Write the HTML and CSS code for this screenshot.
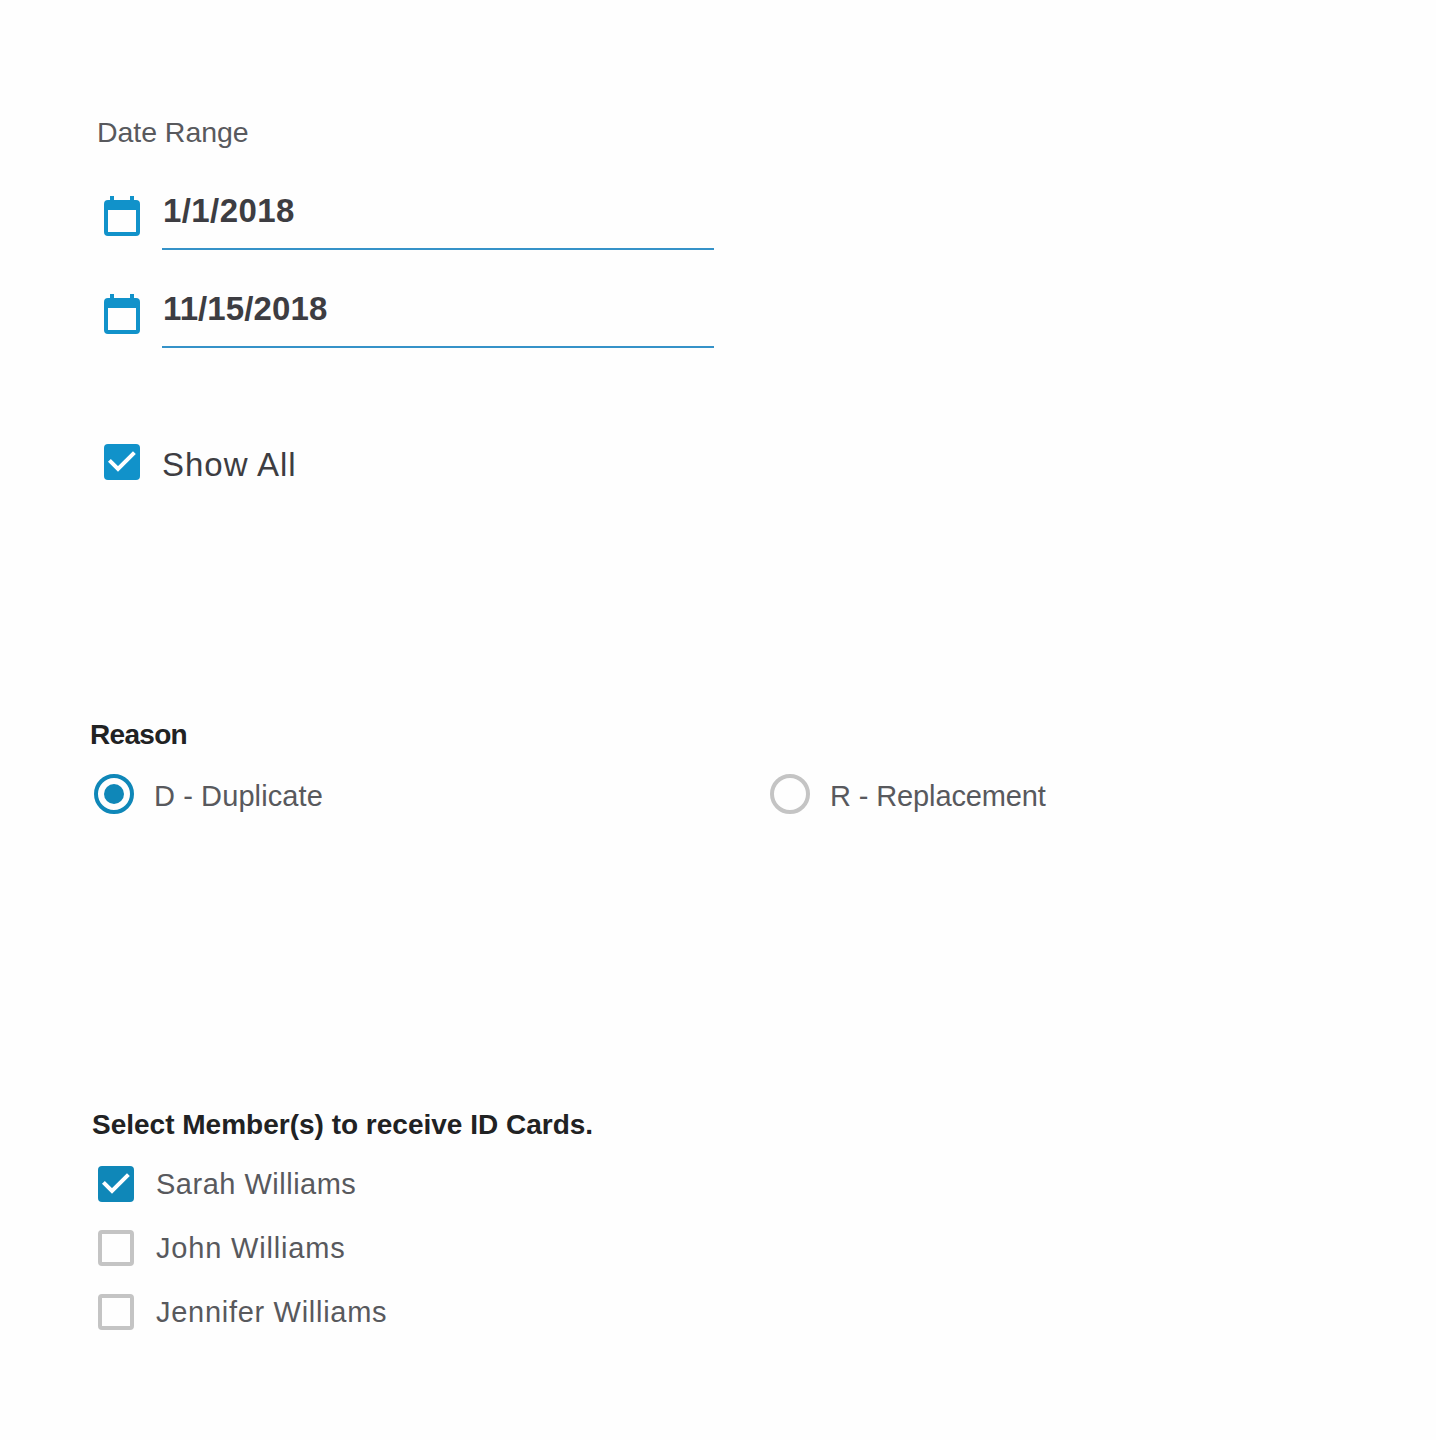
FILE: index.html
```html
<!DOCTYPE html>
<html lang="en">
<head>
<meta charset="utf-8">
<title>ID Card Request</title>
<link rel="stylesheet" href="styles.css">
</head>
<body>
<main class="page">
  <section class="dates">
    <h2 class="dates-title">Date Range</h2>
    <div class="date-row">
      <svg class="calendar" viewBox="0 0 36 40"><path fill-rule="evenodd" d="M6 0h4v4h16V0h4v4h2a4 4 0 0 1 4 4v28a4 4 0 0 1-4 4H4a4 4 0 0 1-4-4V8a4 4 0 0 1 4-4h2zM4 14v22h28V14z"/></svg>
      <div class="date-field date-start">1/1/2018</div>
    </div>
    <div class="date-row">
      <svg class="calendar" viewBox="0 0 36 40"><path fill-rule="evenodd" d="M6 0h4v4h16V0h4v4h2a4 4 0 0 1 4 4v28a4 4 0 0 1-4 4H4a4 4 0 0 1-4-4V8a4 4 0 0 1 4-4h2zM4 14v22h28V14z"/></svg>
      <div class="date-field date-end">11/15/2018</div>
    </div>
    <div class="show-all">
      <svg class="box box-bright" viewBox="0 0 36 36"><rect width="36" height="36" rx="4"/><path d="M5.400 16.400L14 25 30.400 8.600"/></svg>
      <span class="show-all-label">Show All</span>
    </div>
  </section>

  <section class="reason">
    <h2 class="heading reason-title">Reason</h2>
    <div class="radio-group">
      <div class="radio-row">
        <svg class="radio radio-on" viewBox="0 0 40 40"><circle class="ring" cx="20" cy="20" r="18"/><circle class="dot" cx="20" cy="20" r="10"/></svg>
        <span class="label duplicate">D - Duplicate</span>
      </div>
      <div class="radio-row">
        <svg class="radio" viewBox="0 0 40 40"><circle class="ring" cx="20" cy="20" r="18"/></svg>
        <span class="label replacement">R - Replacement</span>
      </div>
    </div>
  </section>

  <section class="members">
    <h2 class="heading">Select Member(s) to receive ID Cards.</h2>
    <div class="member-list">
      <div class="member-row">
        <svg class="box" viewBox="0 0 36 36"><rect width="36" height="36" rx="4"/><path d="M5.400 16.400L14 25 30.400 8.600"/></svg>
        <span class="label sarah">Sarah Williams</span>
      </div>
      <div class="member-row">
        <span class="box box-empty"></span>
        <span class="label john">John Williams</span>
      </div>
      <div class="member-row">
        <span class="box box-empty"></span>
        <span class="label jennifer">Jennifer Williams</span>
      </div>
    </div>
  </section>
</main>
</body>
</html>
```
FILE: styles.css
```css
* { box-sizing: border-box; }

body {
  margin: 0;
  background: #fefefe;
  font-family: "Liberation Sans", Arial, sans-serif;
  color: #58595d;
}

.page {
  display: flex;
  flex-direction: column;
  width: 1436px;
  height: 1440px;
  padding: 112px 90px 0;
}

h2 { margin: 0; white-space: nowrap; }
svg { display: block; flex: none; }

/* Date range */
.dates { height: 602px; padding-left: 14px; }

.dates-title {
  margin: 0 0 39px -7px;
  font-size: 28.5px;
  font-weight: 400;
  line-height: 40px;
  letter-spacing: -0.05px;
}

.date-row {
  display: flex;
  gap: 22px;
  height: 59px;
  margin-bottom: 39px;
}

.calendar {
  width: 36px;
  height: 40px;
  margin-top: 5px;
  fill: #1192ca;
}

.date-field {
  width: 552px;
  padding-left: 1px;
  border-bottom: 2px solid #3592c8;
  font-size: 33px;
  font-weight: 700;
  line-height: 40px;
  color: #3d3d42;
}
.date-start { letter-spacing: 0.4px; }
.date-end { letter-spacing: 0.1px; }

.show-all {
  display: flex;
  gap: 22px;
  margin-top: 96px;
}

.show-all-label {
  font-size: 33px;
  line-height: 41px;
  letter-spacing: 1px;
  color: #3d3d42;
}

/* Controls */
.box {
  flex: none;
  width: 36px;
  height: 36px;
  fill: #0f87b8;
}
.box-bright { fill: #1192ca; }
.box path {
  fill: none;
  stroke: #fff;
  stroke-width: 4;
}
.box-empty {
  border: 4px solid #c4c4c4;
  border-radius: 4px;
}

.radio { width: 40px; height: 40px; }
.ring { fill: none; stroke: #c4c4c4; stroke-width: 4; }
.radio-on .ring { stroke: #0f87b8; }
.dot { fill: #0f87b8; }

.heading {
  padding-top: 1px;
  font-size: 28px;
  font-weight: 700;
  line-height: 40px;
  color: #212223;
}
.reason-title { letter-spacing: -0.7px; }

.label {
  font-size: 29px;
  line-height: 40px;
  white-space: nowrap;
}

/* Reason */
.reason { height: 390px; }
.radio-group {
  display: grid;
  grid-template-columns: 676px 1fr;
  padding: 19px 0 0 4px;
}
.radio-row { display: flex; gap: 20px; }
.radio-row .label { padding-top: 2px; }
.duplicate { letter-spacing: 0.1px; }
.replacement { letter-spacing: -0.12px; }

/* Members */
.members { padding-left: 2px; }
.member-list {
  display: flex;
  flex-direction: column;
  gap: 24px;
  padding: 19px 0 0 6px;
}
.member-row {
  display: flex;
  align-items: flex-start;
  gap: 22px;
  height: 40px;
}
.member-row .box { margin-top: 2px; }
.sarah { letter-spacing: 0.5px; }
.john { letter-spacing: 0.82px; }
.jennifer { letter-spacing: 0.71px; }
```
